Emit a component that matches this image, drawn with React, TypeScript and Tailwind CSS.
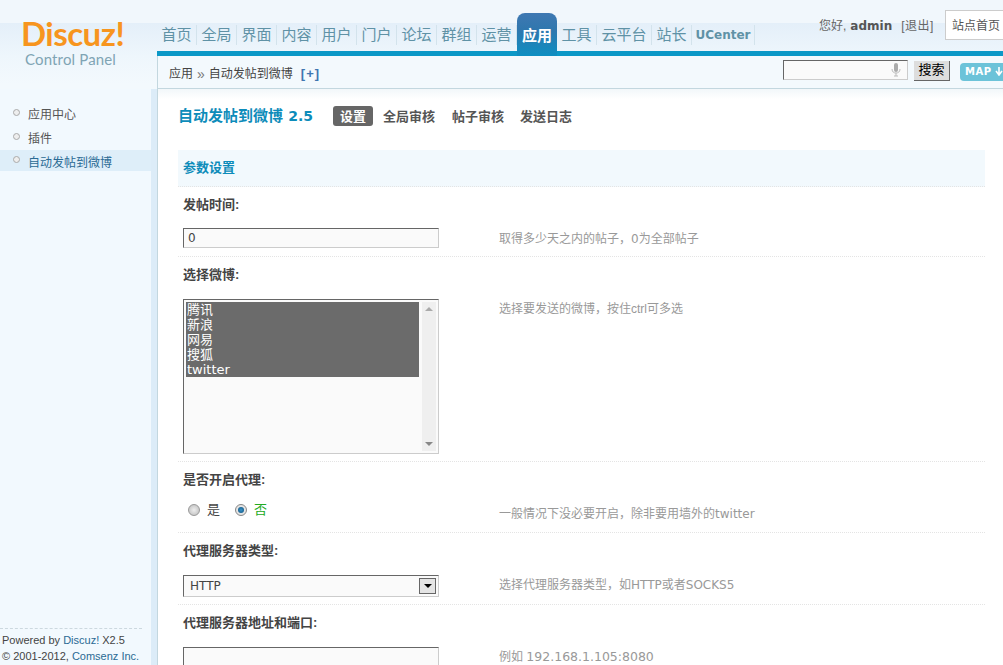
import { ReactNode } from "react";

const navItems = [
  { label: "首页", width: "w-[40px]" },
  { label: "全局", width: "w-[40px]" },
  { label: "界面", width: "w-[40px]" },
  { label: "内容", width: "w-[40px]" },
  { label: "用户", width: "w-[40px]" },
  { label: "门户", width: "w-[40px]" },
  { label: "论坛", width: "w-[40px]" },
  { label: "群组", width: "w-[40px]" },
  { label: "运营", width: "w-[40px]" },
  { label: "应用", width: "w-[40px]", active: true },
  { label: "工具", width: "w-[40px]" },
  { label: "云平台", width: "w-[55px]" },
  { label: "站长", width: "w-[40px]" },
  { label: "UCenter", width: "w-[63px]", latin: true },
];

const sideItems = [
  { label: "应用中心" },
  { label: "插件" },
  { label: "自动发帖到微博", active: true },
];

const inputBorder =
  "border border-t-[#666] border-l-[#666] border-r-[#ccc] border-b-[#ccc] bg-[#fafafa]";
const latin = "font-['DejaVu_Sans',sans-serif]";

const Header = () => {
  return (
    <div className="flex h-[89px] bg-[linear-gradient(#f1f7fc_0,#f1f7fc_23px,#e4eff9_23px,#eef6fc_56px,#f3f9fd_84px)]">
      <div className="w-[157px] shrink-0 pl-[21px] pt-[18px]">
        <div className="font-['Lato',sans-serif] text-[33px] font-bold leading-[30px] tracking-[-0.5px] text-[#f7951e]">
          Discuz!
        </div>
        <div className="ml-[4px] mt-[1px] font-['Lato',sans-serif] text-[15px] leading-[20px] tracking-[0.15px] text-[#7fa4b4]">
          Control Panel
        </div>
      </div>
      <div className="flex min-w-0 flex-1 flex-col">
        <div className="flex h-[51px] items-end">
          {navItems.map((item) =>
            item.active ? (
              <div
                key={item.label}
                className={`${item.width} relative z-10 -mb-[5px] h-[43px] rounded-t-[8px] bg-[linear-gradient(#3f78b2,#2f77ae_40%,#0d8fc2)] pt-[13px] text-center text-[15px] font-bold leading-[20px] text-white`}
              >
                {item.label}
              </div>
            ) : (
              <div key={item.label} className={`${item.width} h-[38px] pt-[12px]`}>
                <div
                  className={`h-[20px] border-r border-[#d3e3ec] text-center leading-[20px] text-[#5f92a6] ${
                    item.latin ? `${latin} text-[12px] font-bold` : "text-[15px]"
                  }`}
                >
                  {item.label}
                </div>
              </div>
            )
          )}
          <div className="ml-auto flex w-[184px] self-start overflow-hidden pt-[10px]">
            <div className="flex h-[30px] w-[126px] shrink-0 items-center pt-[2px] text-[12px] text-[#666]">
              您好,
              <span className={`${latin} ml-[4px] font-bold text-[#555]`}>admin</span>
              <span className="ml-[9px] tracking-[0.5px]">[退出]</span>
            </div>
            <div className="flex h-[30px] w-[80px] shrink-0 items-center border border-[#ccc] bg-white pl-[6px] pt-[2px] text-[12px] text-[#555]">
              站点首页
            </div>
          </div>
        </div>
        <div className="h-[5px] bg-[#0b98c7]" />
        <div className="flex h-[33px] items-center border-b border-l border-b-[#c3d7df] border-l-[#c3d7df] bg-[#f3f9fd] pl-[11px] text-[12px] text-[#444]">
          <div className="flex items-center pt-[4px]">
            <span>应用</span>
            <span className="mx-[4px] text-[14px] leading-[14px] text-[#777]">»</span>
            <span>自动发帖到微博</span>
            <span className="ml-[8px] text-[13px] font-bold tracking-[1px] text-[#3f76b0]">[+]</span>
          </div>
          <div className="mb-[4px] ml-auto flex w-[220px] shrink-0 items-center overflow-hidden">
            <div className={`${inputBorder} flex h-[20px] w-[125px] shrink-0 items-center justify-end pr-[6px]`}>
              <svg width="10" height="14" viewBox="0 0 10 14">
                <rect x="3" y="0" width="4" height="9" rx="2" fill="#aaa" />
                <path d="M1 6c0 3 2 4 4 4s4-1 4-4M5 10v3M3 13h4" fill="none" stroke="#bbb" />
              </svg>
            </div>
            <div className="ml-[6px] mt-[1px] flex h-[20px] w-[36px] shrink-0 items-center justify-center border-r border-b border-r-[#666] border-b-[#666] bg-[#ddd] text-[13px] text-black">
              搜索
            </div>
            <div
              className={`${latin} ml-[10px] mt-[3px] flex h-[18px] w-[60px] shrink-0 items-center rounded-[4px] bg-[#6cc3d9] pl-[5px] text-[10px] font-bold tracking-[0.5px] text-white`}
            >
              MAP
              <svg className="ml-[3px]" width="8" height="9" viewBox="0 0 8 9">
                <path d="M4 0v7M1 4l3 4 3-4" fill="none" stroke="#ffffff" strokeWidth="1.6" />
              </svg>
            </div>
          </div>
        </div>
      </div>
    </div>
  );
};

const Sidebar = () => {
  return (
    <div className="flex w-[158px] shrink-0 border-r border-[#c3d7df] bg-[#dcecf8]">
      <div className="flex w-[151px] flex-col bg-[#f2f9fe] pt-[13px]">
        {sideItems.map((item) =>
          item.active ? (
            <div
              key={item.label}
              className="flex h-[21px] items-center bg-[#deeef9] pl-[13px] pt-[4px] text-[12px] text-[#2a6a94]"
            >
              <span className="mb-[7px] h-[7px] w-[7px] rounded-full border border-[#aaa] bg-[#eee]" />
              <span className="ml-[8px]">{item.label}</span>
            </div>
          ) : (
            <div key={item.label} className="flex h-[24px] items-center pl-[13px] pt-[2px] text-[12px] text-[#555]">
              <span className="mb-[5px] h-[7px] w-[7px] rounded-full border border-[#aaa] bg-[#eee]" />
              <span className="ml-[8px]">{item.label}</span>
            </div>
          )
        )}
        <div className="mt-auto h-[37px] w-[142px] border-t border-dashed border-[#ccd8df] pl-[2px] pt-[3px] text-[11px] leading-[16px] text-[#444]">
          <div className="whitespace-nowrap">
            Powered by <span className="text-[#2a6a94]">Discuz!</span> X2.5
          </div>
          <div className="whitespace-nowrap">
            © 2001-2012, <span className="text-[#2a6a94]">Comsenz Inc.</span>
          </div>
        </div>
      </div>
    </div>
  );
};

const SettingRow = ({
  label,
  tip,
  children,
  last,
  tall,
}: {
  label: string;
  tip: ReactNode;
  children: ReactNode;
  last?: boolean;
  tall?: boolean;
}) => {
  return (
    <div>
      <div className="flex h-[36px] items-center pl-[5px] text-[13px] font-bold text-[#444]">{label}</div>
      <div
        className={`flex pl-[5px] pt-[6px] ${last ? "" : "border-b border-dotted border-[#e4e4e4]"} ${
          tall ? "pb-[9px]" : "pb-[7px]"
        }`}
      >
        <div className="w-[256px] shrink-0">{children}</div>
        <div className="ml-[60px] whitespace-nowrap pt-[1px] text-[12px] leading-[18px] text-[#999]">{tip}</div>
      </div>
    </div>
  );
};

const Radio = ({ checked }: { checked?: boolean }) => {
  return checked ? (
    <span className="flex h-[12px] w-[12px] items-center justify-center rounded-full border border-[#888] bg-[#e4e4e4]">
      <span className="h-[6px] w-[6px] rounded-full bg-[radial-gradient(#3a93c8,#0b4f7c)]" />
    </span>
  ) : (
    <span className="h-[12px] w-[12px] rounded-full border border-[#999] bg-[radial-gradient(#eeeeee,#bbbbbb)]" />
  );
};

const MainPanel = () => {
  return (
    <div className="min-w-0 flex-1 bg-[linear-gradient(#f2f7fa,#ffffff_10px)] pl-[20px] pr-[18px] pt-[17px]">
      <div className="flex h-[20px] items-center">
        <div className="w-[155px] shrink-0 whitespace-nowrap pt-[1px] text-[15px] font-bold text-[#0d8cba]">
          自动发帖到微博 <span className={`${latin} ml-[1px] text-[14px]`}>2.5</span>
        </div>
        <div className="flex h-[20px] w-[40px] items-center justify-center rounded-[3px] bg-[#666] pt-[1px] text-[13px] font-bold text-white">
          设置
        </div>
        <div className="ml-[10px] pt-[1px] text-[13px] font-bold text-[#555]">全局审核</div>
        <div className="ml-[17px] pt-[1px] text-[13px] font-bold text-[#555]">帖子审核</div>
        <div className="ml-[16px] pt-[1px] text-[13px] font-bold text-[#555]">发送日志</div>
      </div>
      <div className="mt-[24px] flex h-[37px] items-center border-b border-dotted border-[#e4e4e4] bg-[#f2f9fd] pl-[5px] text-[13px] font-bold text-[#0d8cba]">
        参数设置
      </div>
      <SettingRow
        label="发帖时间:"
        tip={
          <>
            取得多少天之内的帖子{"\uFF0C"}<span className={latin}>0</span>为全部帖子
          </>
        }
      >
        <div className={`${inputBorder} ${latin} -mt-[1px] mb-[1px] flex h-[20px] items-center pl-[4px] text-[12px] text-[#444]`}>0</div>
      </SettingRow>
      <SettingRow label="选择微博:" tip={"选择要发送的微博\uFF0C按住ctrl可多选"}>
        <div className={`${inputBorder} flex h-[155px] p-[2px]`}>
          <div className="w-[233px] shrink-0 text-[13px] leading-[15px] text-white">
            <div className="bg-[#6b6b6b] pl-[1px]">腾讯</div>
            <div className="bg-[#6b6b6b] pl-[1px]">新浪</div>
            <div className="bg-[#6b6b6b] pl-[1px]">网易</div>
            <div className="bg-[#6b6b6b] pl-[1px]">搜狐</div>
            <div className={`${latin} bg-[#6b6b6b] pl-[1px]`}>twitter</div>
          </div>
          <div className="ml-[3px] flex flex-1 flex-col items-center justify-between bg-[#efefef] py-[5px]">
            <span className="h-0 w-0 border-x-[4px] border-b-[4px] border-x-transparent border-b-[#aaa]" />
            <span className="h-0 w-0 border-x-[4px] border-t-[4px] border-x-transparent border-t-[#888]" />
          </div>
        </div>
      </SettingRow>
      <SettingRow
        label="是否开启代理:"
        tall
        tip={
          <>
            一般情况下没必要开启{"\uFF0C"}除非要用墙外的<span className={latin}>twitter</span>
          </>
        }
      >
        <div className="flex h-[11px] items-center pl-[5px] text-[13px] text-[#444]">
          <Radio />
          <span className="ml-[7px]">是</span>
          <span className="ml-[15px]">
            <Radio checked />
          </span>
          <span className="ml-[7px] text-[#22aa22]">否</span>
        </div>
      </SettingRow>
      <SettingRow
        label="代理服务器类型:"
        tip={
          <>
            选择代理服务器类型{"\uFF0C"}如<span className={latin}>HTTP</span>或者<span className={latin}>SOCKS5</span>
          </>
        }
      >
        <div className={`${inputBorder} flex h-[22px] items-center justify-between pl-[6px] pr-[2px] text-[12px] text-[#444]`}>
          <span className={latin}>HTTP</span>
          <span className="flex h-[16px] w-[17px] items-center justify-center border border-[#666] bg-[#e4e4e4]">
            <span className="h-0 w-0 border-x-[4px] border-t-[4px] border-x-transparent border-t-black" />
          </span>
        </div>
      </SettingRow>
      <SettingRow
        label="代理服务器地址和端口:"
        tip={
          <>
            例如 <span className={`${latin} text-[12.5px]`}>192.168.1.105:8080</span>
          </>
        }
        last
      >
        <div className={`${inputBorder} h-[20px]`} />
      </SettingRow>
    </div>
  );
};

export default function App() {
  return (
    <div className="flex h-[665px] w-[1003px] flex-col overflow-hidden bg-white font-['Liberation_Sans','Noto_Sans_CJK_SC',sans-serif]">
      <Header />
      <div className="flex min-h-0 flex-1">
        <Sidebar />
        <MainPanel />
      </div>
    </div>
  );
}
